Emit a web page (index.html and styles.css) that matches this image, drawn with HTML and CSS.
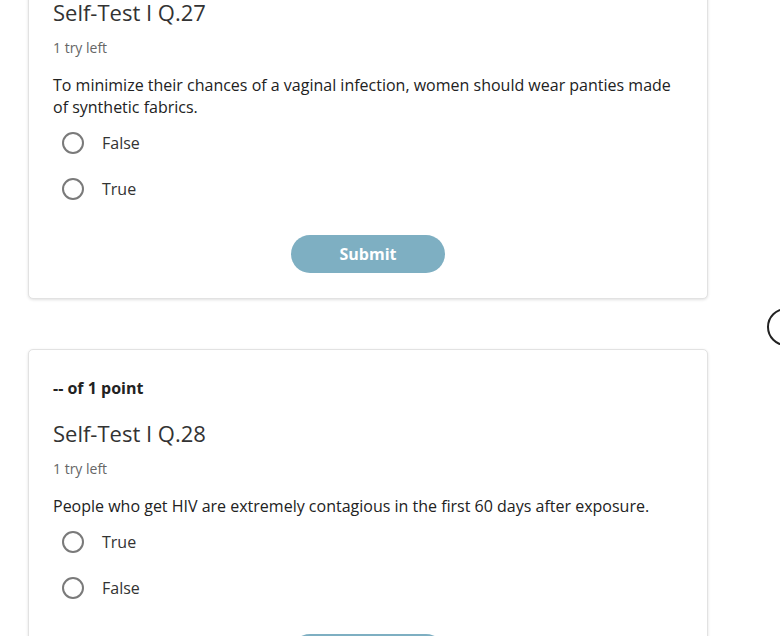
FILE: index.html
```html
<!DOCTYPE html>
<html lang="en">
<head>
<meta charset="UTF-8">
<meta name="viewport" content="width=device-width, initial-scale=1.0">
<title>Self-Test</title>
<link rel="stylesheet" href="styles.css">
</head>
<body>
<div class="page">
    <div class="card">
        <p class="points">-- of 1 point</p>
        <h2 class="title">Self-Test I Q.27</h2>
        <p class="tries">1 try left</p>
        <p class="question">To minimize their chances of a vaginal infection, women should wear panties made of synthetic fabrics.</p>
        <div class="options">
            <label class="option"><span class="radio"></span>False</label>
            <label class="option"><span class="radio"></span>True</label>
        </div>
        <div class="actions"><button class="submit">Submit</button></div>
    </div>

    <div class="card">
        <p class="points">-- of 1 point</p>
        <h2 class="title">Self-Test I Q.28</h2>
        <p class="tries">1 try left</p>
        <p class="question">People who get HIV are extremely contagious in the first 60 days after exposure.</p>
        <div class="options">
            <label class="option"><span class="radio"></span>True</label>
            <label class="option"><span class="radio"></span>False</label>
        </div>
        <div class="actions"><button class="submit">Submit</button></div>
    </div>
</div>
<div class="next-btn"></div>
</body>
</html>
```

FILE: styles.css
```css
body {
    font-family: "Open Sans", "Liberation Sans", sans-serif;
    margin: 0;
    padding: 0;
    background-color: #fff;
    color: #222;
    overflow: hidden;
}
.page {
    margin-top: -72px;
    padding-left: 28px;
    width: 680px;
    display: flex;
    flex-direction: column;
    gap: 50px;
}
.card {
    border: 1px solid #e2e2e2;
    border-radius: 5px;
    box-shadow: 0 1px 3px rgba(0,0,0,0.12);
    padding: 26px 24px 25px;
    background-color: #fff;
}
.points {
    margin: 0;
    font-size: 16px;
    line-height: 24px;
    font-weight: 700;
    color: #222;
}
.title {
    margin: 18px 0 0;
    font-size: 22px;
    line-height: 30px;
    font-weight: 400;
    color: #333;
}
.tries {
    margin: 12px 0 0;
    font-size: 14px;
    line-height: 18px;
    color: #666;
}
.question {
    margin: 17px 0 0;
    font-size: 16px;
    line-height: 22px;
    color: #222;
}
.options {
    margin-top: 2px;
    display: flex;
    flex-direction: column;
}
.option {
    display: flex;
    align-items: center;
    height: 46px;
    padding-left: 9px;
    font-size: 16px;
    color: #333;
}
.radio {
    width: 18px;
    height: 18px;
    border: 2px solid #7a7a7a;
    border-radius: 50%;
    margin-right: 18px;
}
.actions {
    margin-top: 23px;
    display: flex;
    justify-content: center;
}
.submit {
    width: 154px;
    height: 38px;
    border: none;
    border-radius: 19px;
    background-color: #7eafc2;
    color: #fff;
    font-family: "Open Sans", "Liberation Sans", sans-serif;
    font-size: 16px;
    font-weight: 700;
    cursor: pointer;
}
.next-btn {
    position: absolute;
    left: 767px;
    top: 308px;
    width: 34px;
    height: 34px;
    border: 2px solid #222;
    border-radius: 50%;
    background-color: #fff;
}
```
